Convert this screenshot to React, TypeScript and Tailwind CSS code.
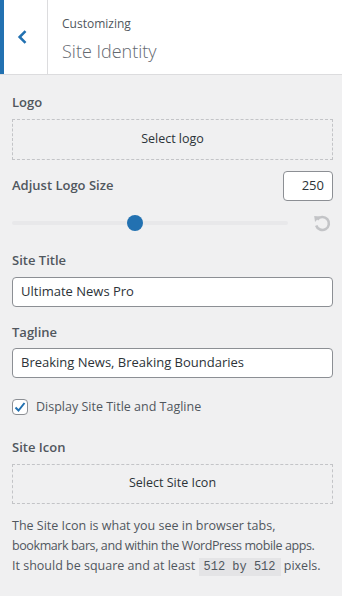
export default function App() {
  return (
    <div
      className="w-[342px] h-[596px] bg-[#f0f0f1] text-[#3c434a] overflow-hidden"
      style={{ fontFamily: '"Open Sans", "Noto Sans", sans-serif' }}
    >
      {/* header */}
      <div className="flex h-[75px] bg-white border-b border-[#dcdcde]">
        <div className="w-[48px] flex items-center border-r border-[#dcdcde] border-l-4 border-l-[#2271b1]">
          <svg width="44" height="20" viewBox="0 0 44 20">
            <path d="M22 4 L16 10 L22 16" fill="none" stroke="#2271b1" strokeWidth="2.6" />
          </svg>
        </div>
        <div className="pl-[14px] pt-[15px]">
          <div className="text-[12px] leading-[18px] text-[#50575e]">Customizing</div>
          <div className="text-[18px] leading-[26px] font-light text-[#646970] mt-[5px]">Site Identity</div>
        </div>
      </div>

      <div className="pl-[12px] pr-[9px] pt-[16px]">
        {/* Logo */}
        <div className="text-[13px] leading-[22px] font-semibold text-[#50575e]">Logo</div>
        <button className="mt-[6px] w-full h-[41px] border border-dashed border-[#c3c4c7] text-[12.5px] text-[#2c3338]">
          Select logo
        </button>

        {/* Logo size */}
        <div className="flex items-center justify-between mt-[11px]">
          <div className="text-[13px] font-semibold text-[#50575e]">Adjust Logo Size</div>
          <div className="w-[50px] h-[30px] bg-white border border-[#8c8f94] rounded-[4px] text-[13px] text-[#2c3338] flex items-center justify-end pr-[8px]">
            250
          </div>
        </div>
        <div className="flex items-center h-[34px] mt-[5px]">
          <div className="relative w-[276px] h-[4px] bg-[#e8e8ea] rounded">
            <div className="absolute left-[115px] -top-[6px] w-[16px] h-[16px] rounded-full bg-[#2271b1]" />
          </div>
          <svg className="ml-[24px]" width="20" height="20" viewBox="0 0 20 20">
            <path
              d="M5.2 6.6 A6.5 6.5 0 1 1 4.2 12.5"
              fill="none"
              stroke="#c3c4c7"
              strokeWidth="2.6"
            />
            <path d="M2.2 3 L8 3.4 L3 9 Z" fill="#c3c4c7" />
          </svg>
        </div>

        {/* Site title */}
        <div className="text-[13px] leading-[22px] font-semibold text-[#50575e] mt-[9px]">Site Title</div>
        <div className="mt-[6px] h-[30px] bg-white border border-[#8c8f94] rounded-[4px] text-[13px] text-[#2c3338] flex items-center px-[8px]">
          Ultimate News Pro
        </div>

        <div className="text-[13px] leading-[22px] font-semibold text-[#50575e] mt-[14px]">Tagline</div>
        <div className="mt-[5px] h-[30px] bg-white border border-[#8c8f94] rounded-[4px] text-[13px] text-[#2c3338] flex items-center px-[8px]">
          Breaking News, Breaking Boundaries
        </div>

        {/* checkbox */}
        <div className="flex items-center mt-[20px]">
          <div className="w-[16px] h-[16px] bg-white border border-[#8c8f94] rounded-[4px] flex items-center justify-center">
            <svg width="14" height="14" viewBox="0 0 14 14">
              <path d="M2.5 7.5 L5.5 10.5 L11.5 3" fill="none" stroke="#2271b1" strokeWidth="2" />
            </svg>
          </div>
          <span className="ml-[8px] text-[12.5px] text-[#50575e]">Display Site Title and Tagline</span>
        </div>

        {/* site icon */}
        <div className="text-[13px] leading-[22px] font-semibold text-[#50575e] mt-[19px]">Site Icon</div>
        <button className="mt-[6px] w-full h-[40px] border border-dashed border-[#c3c4c7] text-[12.5px] text-[#2c3338]">
          Select Site Icon
        </button>
        <div className="mt-[12px] text-[12.5px] leading-[20px] text-[#50575e]">
          <div className="whitespace-nowrap">The Site Icon is what you see in browser tabs,</div>
          <div className="whitespace-nowrap tracking-[-0.4px]">bookmark bars, and within the WordPress mobile apps.</div>
          <div className="whitespace-nowrap">
            It should be square and at least{' '}
            <code
              className="bg-[#e4e4e6] px-[5px] py-[2px] text-[12px] text-[#50575e] whitespace-pre"
              style={{ fontFamily: '"Liberation Mono", monospace' }}
            >
              512 by 512
            </code>{' '}
            pixels.
          </div>
        </div>
      </div>
    </div>
  );
}
